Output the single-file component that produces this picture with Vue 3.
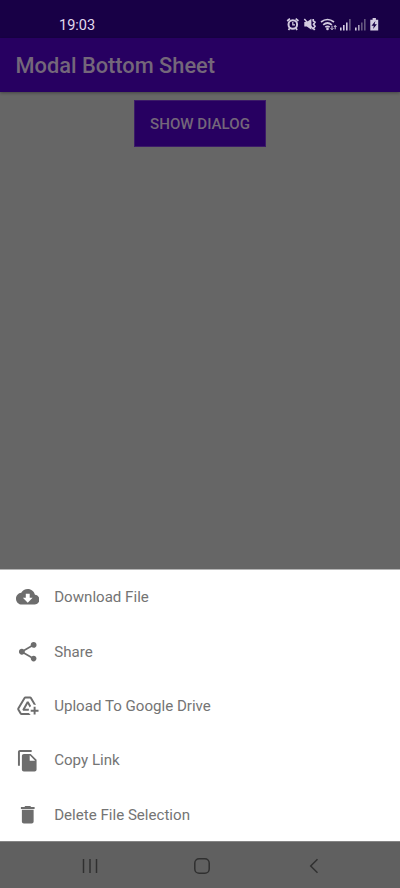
<script setup>
const items = [
  { label: 'Download File', path: 'M19.35 10.04C18.67 6.59 15.64 4 12 4 9.11 4 6.6 5.64 5.35 8.04 2.34 8.36 0 10.91 0 14c0 3.31 2.69 6 6 6h13c2.76 0 5-2.24 5-5 0-2.64-2.05-4.78-4.65-4.96zM17 13l-5 5-5-5h3V9h4v4h3z' },
  { label: 'Share', path: 'M18 16.08c-.76 0-1.44.3-1.96.77L8.91 12.7c.05-.23.09-.46.09-.7s-.04-.47-.09-.7l7.05-4.11c.54.5 1.25.81 2.04.81 1.66 0 3-1.34 3-3s-1.34-3-3-3-3 1.34-3 3c0 .24.04.47.09.7L8.04 9.81C7.5 9.31 6.79 9 6 9c-1.66 0-3 1.34-3 3s1.34 3 3 3c.79 0 1.5-.31 2.04-.81l7.12 4.16c-.05.21-.08.43-.08.65 0 1.61 1.31 2.92 2.92 2.92s2.92-1.31 2.92-2.92-1.31-2.92-2.92-2.92z' },
  { label: 'Upload To Google Drive', path: 'M20 21v-3h3v-2h-3v-3h-2v3h-3v2h3v3h2zm-4.97.5H5.66c-.72 0-1.38-.38-1.74-1l-2.43-4.24c-.36-.61-.36-1.37.01-1.98L7.9 3.49c.36-.61 1.02-.99 1.73-.99h4.73c.71 0 1.37.38 1.73.99l4.48 7.69C20.06 11.06 19.54 11 19 11c-.28 0-.56.02-.84.06L14.36 4.5H9.63L3.24 15.25l2.43 4.25h7.64c.35.78.86 1.46 1.72 2zM13.34 15C13.12 15.63 13 16.3 13 17H7.25l-.73-1.27 4.58-7.98h1.8l2.53 4.42c-.56.42-1.05.93-1.44 1.51l-2-3.49L9.25 15H13.34z' },
  { label: 'Copy Link', path: 'M16 1H4c-1.1 0-2 .9-2 2v14h2V3h12V1zm-1 4l6 6v10c0 1.1-.9 2-2 2H7.99C6.89 23 6 22.1 6 21l.01-14c0-1.1.89-2 1.99-2h7zm-1 7h5.5L14 6.5V12z' },
  { label: 'Delete File Selection', path: 'M6 19c0 1.1.9 2 2 2h8c1.1 0 2-.9 2-2V7H6v12zM19 4h-3.5l-1-1h-5l-1 1H5v2h14V4z' }
]
</script>

<template>
  <div class="screen">
    <header class="status">
      <span class="clock">19:03</span>
      <svg class="indicators" width="94" height="16" viewBox="0 0 94 16">
        <g fill="none" stroke="#d3cbe0">
          <circle cx="6.8" cy="8.500" r="4.300" stroke-width="2" />
          <path d="M1.200 5 3.900 2.600M12.400 5 9.700 2.600M3.700 12.200 2.500 14M9.900 12.200l1.200 1.800" stroke-width="1.700" />
          <path d="M6.800 6v2.800h2.200" stroke-width="1.200" />
          <path d="M18.300 3 27.500 13.300" stroke-width="1.500" />
          <path d="M27.200 3v1.800l1.800 1.400-1.500 2 1.500 2-1.500 2 1.200 1.800" stroke-width="1.700" />
          <path d="M35 6Q41.500 1 48 6M37.200 8.800q4.300-3.600 8.600 0M39.300 11.200q2.200-1.700 4.400 0" stroke-width="1.700" />
          <path d="M46 9.700v3.500M44.600 12.200l1.400 1.600 1.400-1.600M49.200 13.300V9.500M47.900 11l1.300-1.500 1.300 1.500" stroke-width="1" />
        </g>
        <g fill="#d3cbe0">
          <path d="M18.300 6h2.500l4.600-3.200v11L20.800 10.500h-2.500z" />
          <circle cx="41.500" cy="12.900" r="1.300" />
          <path d="M54 11.500h1.600v3H54zM57 9h1.600v5.500H57zM60 6.500h1.600v8H60zM69 11.500h1.600v3H69z" />
          <path d="M84.300 3.700h2.300V2h3.300v1.700h2.300v10.800h-7.900z" />
        </g>
        <path d="M63 3h1.700v11.500H63zM75 6.500h1.600v8H75zM78 3h1.600v11.500H78z" fill="#64577f" />
        <path d="M72 9h1.600v5.500H72z" fill="#a99db9" />
        <path d="M89.400 5 85.500 9.700h2.300l-.7 3.300 3.800-4.700h-2.300z" fill="#180046" />
      </svg>
    </header>
    <div class="toolbar">Modal Bottom Sheet</div>
    <main class="content"><button class="show">SHOW DIALOG</button></main>
    <section class="sheet">
      <div v-for="item in items" :key="item.label" class="row">
        <svg class="icon" viewBox="0 0 24 24"><path :d="item.path" fill="#6d6d6d" /></svg>
        <span>{{ item.label }}</span>
      </div>
    </section>
    <nav class="nav">
      <svg width="16" height="16" viewBox="0 0 16 16"><path d="M1.500 1v14M8 1v14M14.500 1v14" /></svg>
      <svg width="16" height="16" viewBox="0 0 16 16"><rect x=".8" y=".8" width="14.400" height="14.400" rx="4.300" /></svg>
      <svg width="16" height="16" viewBox="0 0 16 16"><path d="M11.500 1.200 4.700 8l6.800 6.800" /></svg>
    </nav>
  </div>
</template>

<style scoped>
.screen {
  width: 400px;
  height: 888px;
  display: flex;
  flex-direction: column;
  overflow: hidden;
  background: #666;
  font-family: Roboto, sans-serif;
}
.status {
  height: 38px;
  flex: none;
  box-sizing: border-box;
  display: flex;
  justify-content: space-between;
  padding: 16px 20px 0 59px;
  background: #180046;
}
.clock {
  color: #e0d9ed;
  font-size: 14.5px;
  line-height: 19px;
}
.indicators { display: block; }
.toolbar {
  height: 54px;
  flex: none;
  padding-left: 15.5px;
  background: #270061;
  color: #74677a;
  font-size: 21.8px;
  font-weight: 500;
  line-height: 55px;
  box-shadow: 0 1px 3px #0005;
}
.content {
  flex: 1;
  display: flex;
  justify-content: center;
  align-items: flex-start;
  padding-top: 8px;
}
.show {
  width: 132px;
  height: 47px;
  padding: 0;
  border: 1px solid #3c1b68;
  background: #270061;
  color: #74677a;
  font: 500 15.1px Roboto, sans-serif;
}
.sheet {
  height: 272px;
  flex: none;
  box-sizing: border-box;
  background: #fff;
  border-top: 1px solid #b5b5b5;
}
.row {
  height: 54.4px;
  display: flex;
  align-items: center;
  gap: 15px;
  padding-left: 15.7px;
  color: #747474;
  font-size: 15.1px;
}
.icon {
  width: 23.5px;
  height: 23.5px;
  flex: none;
}
.nav {
  height: 47px;
  flex: none;
  box-sizing: border-box;
  display: flex;
  gap: 96px;
  align-items: center;
  padding: 1px 0 0 81.5px;
  background: #606060;
  border-top: 1px solid #858585;
}
.nav svg {
  fill: none;
  stroke: #303030;
  stroke-width: 1.5;
}
</style>
